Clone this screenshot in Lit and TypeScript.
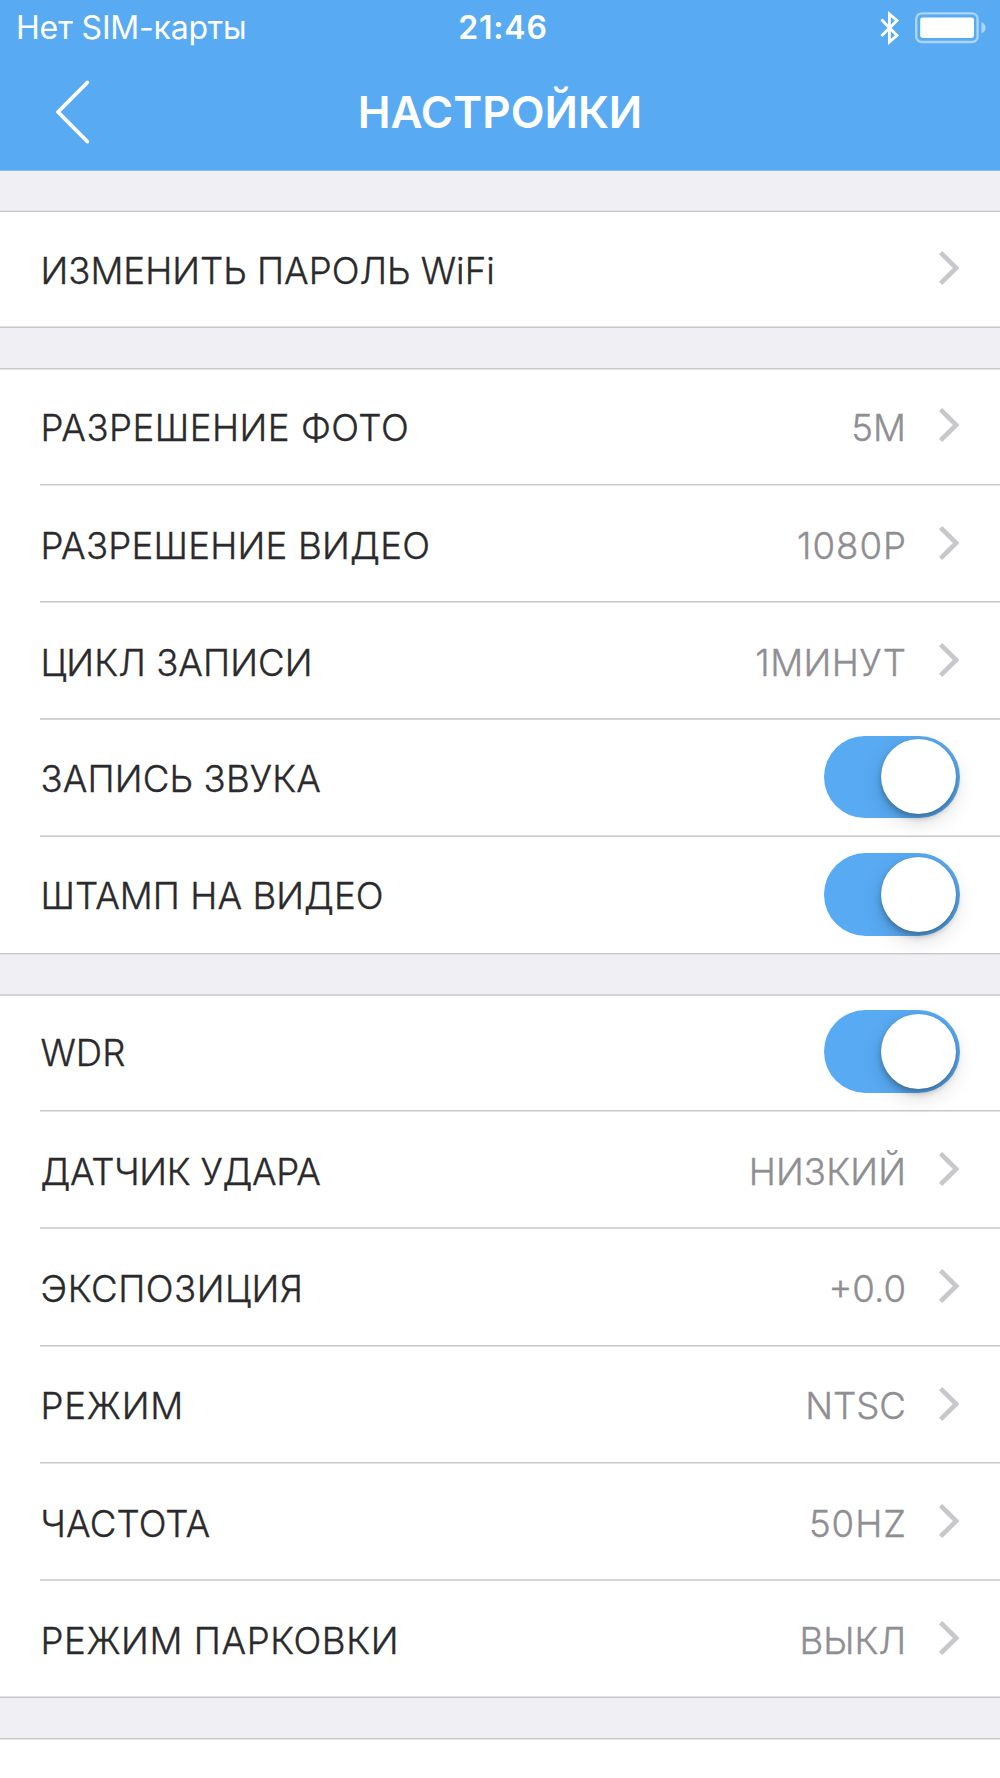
import { LitElement, html, css, nothing } from "lit";
import { customElement, property } from "lit/decorators.js";
import { styleMap } from "lit/directives/style-map.js";

type Hair = "low" | "high" | "even";

interface Item {
  label: string;
  value?: string;
  toggle?: boolean;
  height: number;
  /* vertical fine-tuning of label, accessory */
  text: number;
  mark: number;
  hair: Hair;
  track?: number;
  valueTrack?: number;
}

interface Group {
  gap: number;
  top: Hair;
  items: Item[];
}

const groups: Group[] = [
  {
    gap: 39,
    top: "low",
    items: [{ label: "ИЗМЕНИТЬ ПАРОЛЬ WiFi", height: 114, text: 72, mark: 39, hair: "low" }],
  },
  {
    gap: 40,
    top: "high",
    items: [
      { label: "РАЗРЕШЕНИЕ ФОТО", value: "5M", height: 114, text: 71, mark: 38, hair: "high", track: 0.5 },
      { label: "РАЗРЕШЕНИЕ ВИДЕО", value: "1080P", height: 115, text: 73, mark: 40, hair: "high", track: 0.24, valueTrack: 1 },
      { label: "ЦИКЛ ЗАПИСИ", value: "1МИНУТ", height: 115, text: 73, mark: 40, hair: "even", track: 0.05, valueTrack: 0.45 },
      { label: "ЗАПИСЬ ЗВУКА", toggle: true, height: 115, text: 72, mark: 15.6, hair: "low", track: 0.15 },
      { label: "ШТАМП НА ВИДЕО", toggle: true, height: 116, text: 72, mark: 16, hair: "high", track: 0.05 },
    ],
  },
  {
    gap: 39,
    top: "even",
    items: [
      { label: "WDR", toggle: true, height: 114, text: 70, mark: 14.3, hair: "high" },
      { label: "ДАТЧИК УДАРА", value: "НИЗКИЙ", height: 115, text: 73, mark: 40, hair: "even", track: -0.3, valueTrack: 0.15 },
      { label: "ЭКСПОЗИЦИЯ", value: "+0.0", height: 116, text: 73, mark: 40, hair: "high", track: 0.55 },
      { label: "РЕЖИМ", value: "NTSC", height: 115, text: 72, mark: 40, hair: "high", track: 0.8 },
      { label: "ЧАСТОТА", value: "50HZ", height: 115, text: 73, mark: 40, hair: "even", track: 0.1, valueTrack: 1 },
      { label: "РЕЖИМ ПАРКОВКИ", value: "ВЫКЛ", height: 115, text: 73, mark: 40, hair: "low", track: 0.58 },
    ],
  },
];

@customElement("settings-row")
class SettingsRow extends LitElement {
  @property({ attribute: false }) item!: Item;

  static styles = css`
    :host {
      display: block;
      background: #fff;
    }
    .row {
      box-sizing: border-box;
      display: flex;
      align-items: flex-start;
      padding: 0 40px 0 40.5px;
    }
    .label,
    .value {
      font-size: 36.6px;
      line-height: 46px;
      font-weight: 300;
      white-space: nowrap;
      color: #2a2a2c;
      -webkit-text-stroke: 0.35px currentColor;
    }
    .label {
      flex: 1;
    }
    .value {
      color: #8e8e93;
    }
    .chevron {
      display: block;
      width: 22px;
      height: 34px;
      margin-left: 32px;
    }
    .toggle {
      box-sizing: border-box;
      display: flex;
      justify-content: flex-end;
      width: 136px;
      height: 82.6px;
      padding: 3.8px 4px;
      border-radius: 42px;
      background: #58aaf3;
    }
    .knob {
      width: 75px;
      height: 75px;
      border-radius: 50%;
      background: #fff;
      box-shadow: 0 8px 21px rgba(0, 0, 0, 0.14), 0 4px 6px rgba(0, 0, 0, 0.26),
        0 0 1px rgba(0, 0, 0, 0.2);
    }
  `;

  render() {
    const i = this.item;
    const place = (top: number, track = 0) =>
      styleMap({
        marginTop: `${top}px`,
        marginRight: `${-track}px`,
        letterSpacing: `${track}px`,
      });
    return html`
      <div class="row" style=${styleMap({ height: `${i.height}px` })}>
        <span class="label" style=${place(i.text - 36, i.track)}>${i.label}</span>
        ${i.value
          ? html`<span class="value" style=${place(i.text - 36, i.valueTrack)}>${i.value}</span>`
          : nothing}
        ${i.toggle
          ? html`<div class="toggle" style=${styleMap({ marginTop: `${i.mark}px` })}>
              <div class="knob"></div>
            </div>`
          : html`<svg class="chevron" style=${styleMap({ marginTop: `${i.mark}px` })} viewBox="0 0 22 34">
              <path d="M2.6 1.6 L18.2 17 L2.6 32.4" fill="none" stroke="#c7c7cc" stroke-width="4.6" />
            </svg>`}
      </div>
    `;
  }
}

@customElement("app-root")
class AppRoot extends LitElement {
  static styles = css`
    :host {
      display: block;
      width: 1000px;
      height: 1778px;
      overflow: hidden;
      background: #fff;
      font-family: Inter, "Liberation Sans", sans-serif;
    }
    .header {
      height: 171px;
      box-sizing: border-box;
      background: #58aaf3;
      border-bottom: 1px solid #84bff3;
      color: #fff;
    }
    .status,
    .nav {
      display: grid;
      grid-template-columns: 1fr auto 1fr;
      align-items: center;
    }
    .status {
      height: 54px;
      padding: 0 14px 0 16px;
      font-size: 32px;
      line-height: 54px;
    }
    .carrier,
    .time {
      padding-top: 1px;
    }
    .carrier {
      font-weight: 400;
      letter-spacing: -0.2px;
      white-space: nowrap;
    }
    .time {
      padding-left: 4px;
      font-weight: 600;
      letter-spacing: 0.8px;
    }
    .icons {
      display: flex;
      justify-content: flex-end;
      align-items: center;
      gap: 15px;
    }
    .icons svg {
      display: block;
    }
    .nav {
      height: 115px;
      padding: 0 54px;
    }
    .back {
      display: block;
      width: 38px;
      height: 66px;
    }
    .title {
      font-size: 44px;
      line-height: 60px;
      font-weight: 600;
    }
    .gap {
      background: #efeff4;
    }
    .gap.last {
      height: 40px;
    }
    .hair {
      height: 2px;
      background: #fff;
    }
    .hair.inset {
      padding-left: 40px;
    }
    .ink {
      height: 2px;
    }
    .low {
      background: linear-gradient(#e2e1e5 50%, #c8c7cc 50%);
    }
    .high {
      background: linear-gradient(#c8c7cc 50%, #e4e4e8 50%);
    }
    .even {
      background: #d5d4d9;
    }
  `;

  private hair(kind: Hair, inset: boolean) {
    return html`<div class="hair ${inset ? "inset" : ""}"><div class="ink ${kind}"></div></div>`;
  }

  private group(g: Group) {
    return html`
      <div class="gap" style=${styleMap({ height: `${g.gap}px` })}></div>
      ${this.hair(g.top, false)}
      ${g.items.map(
        (item, n) => html`
          <settings-row .item=${item}></settings-row>
          ${this.hair(item.hair, n < g.items.length - 1)}
        `
      )}
    `;
  }

  render() {
    return html`
      <div class="header">
        <div class="status">
          <span class="carrier">Нет SIM-карты</span>
          <span class="time">21:46</span>
          <div class="icons">
            <svg width="20" height="34" viewBox="0 0 20 34">
              <path
                d="M1.4 8.4 L17 24.4 L9.4 31 L9.4 3 L17 9.6 L1.4 25"
                fill="none"
                stroke="#fff"
                stroke-width="2.8"
              />
            </svg>
            <svg width="71" height="32" viewBox="0 0 71 32">
              <rect x="1.2" y="1.4" width="61.4" height="28.6" rx="5.5" fill="none" stroke="#fff" stroke-opacity=".5" stroke-width="2.4" />
              <rect x="5.2" y="5.6" width="53.8" height="20.4" rx="2.4" fill="#fff" />
              <path d="M66.4 10 Q70.6 12 70.6 15.8 Q70.6 19.6 66.4 21.6 Z" fill="#fff" fill-opacity=".5" />
            </svg>
          </div>
        </div>
        <div class="nav">
          <svg class="back" viewBox="0 0 38 66">
            <path d="M33.3 3.5 L4 33 L33.3 62.5" fill="none" stroke="#fff" stroke-width="3.9" stroke-linecap="round" stroke-linejoin="round" />
          </svg>
          <span class="title">НАСТРОЙКИ</span>
          <span></span>
        </div>
      </div>
      ${groups.map((g) => this.group(g))}
      <div class="gap last"></div>
      ${this.hair("high", false)}
    `;
  }
}
